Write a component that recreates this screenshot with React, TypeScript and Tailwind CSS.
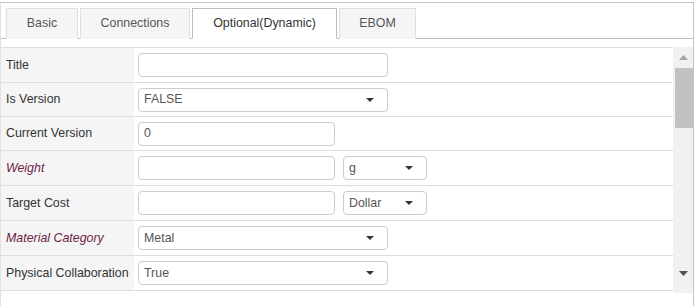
import { ReactNode } from "react";

type Field = {
  label: string;
  italic?: boolean;
  h: string;
  control: ReactNode;
};

function TextBox({ width, value }: { width: string; value?: string }) {
  return (
    <div className={`${width} h-[24px] border border-[#cccccc] rounded-[4px] bg-white flex items-center px-[5px] text-[12.4px] text-[#555555]`}>
      {value}
    </div>
  );
}

function Caret({ color = "#333333" }: { color?: string }) {
  return (
    <svg width="8" height="4" viewBox="0 0 8 4">
      <path d="M0 0 L8 0 L4 4 Z" fill={color} />
    </svg>
  );
}

function Dropdown({ width, value }: { width: string; value: string }) {
  return (
    <div className={`${width} h-[24px] border border-[#cccccc] rounded-[4px] bg-white flex items-center justify-between pl-[5px] pr-[13px] text-[12.4px] text-[#555555]`}>
      <span>{value}</span>
      <Caret />
    </div>
  );
}

const fields: Field[] = [
  { label: "Title", h: "h-[35px]", control: <TextBox width="w-[250px]" /> },
  { label: "Is Version", h: "h-[34px]", control: <Dropdown width="w-[250px]" value="FALSE" /> },
  { label: "Current Version", h: "h-[34px]", control: <TextBox width="w-[197px]" value="0" /> },
  {
    label: "Weight",
    italic: true,
    h: "h-[35px]",
    control: (
      <div className="flex gap-[8px]">
        <TextBox width="w-[197px]" />
        <Dropdown width="w-[84px]" value="g" />
      </div>
    ),
  },
  {
    label: "Target Cost",
    h: "h-[35px]",
    control: (
      <div className="flex gap-[8px]">
        <TextBox width="w-[197px]" />
        <Dropdown width="w-[84px]" value="Dollar" />
      </div>
    ),
  },
  { label: "Material Category", italic: true, h: "h-[35px]", control: <Dropdown width="w-[250px]" value="Metal" /> },
  { label: "Physical Collaboration", h: "h-[35px]", control: <Dropdown width="w-[250px]" value="True" /> },
];

const tabs = [
  { name: "Basic", w: "w-[72px]" },
  { name: "Connections", w: "w-[110px]" },
  { name: "Optional(Dynamic)", w: "w-[145px]", active: true },
  { name: "EBOM", w: "w-[77px]" },
];

export default function App() {
  return (
    <div className="w-[696px] h-[306px] bg-white overflow-hidden font-['Liberation_Sans',Arial,sans-serif]">
      <div className="mt-[2px] w-[694px] h-[304px] border-t border-r border-l border-t-[#c4c4c4] border-r-[#c4c4c4] border-l-[#e2e2e2] flex flex-col">
        {/* tab strip */}
        <div className="flex gap-[2px] pl-[5px] pt-[5px] h-[36px] border-b border-[#bdbdbd]">
          {tabs.map((t) => (
            <div
              key={t.name}
              className={`${t.w} h-[31px] flex items-center justify-center text-[12.4px] border ${
                t.active
                  ? "bg-white border-[#bdbdbd] border-b-white text-[#333333]"
                  : "bg-[#f5f5f5] border-[#dddddd] border-b-transparent h-[30px] text-[#555555]"
              }`}
            >
              {t.name}
            </div>
          ))}
        </div>

        {/* form body */}
        <div className="mt-[8px] flex">
          <div className="w-[672px] border-t border-[#dddddd]">
            {fields.map((f) => (
              <div key={f.label} className={`${f.h} flex border-b border-[#dddddd]`}>
                <div
                  className={`w-[133px] shrink-0 bg-[#f5f5f5] flex items-center pl-[5px] text-[12.4px] ${
                    f.italic ? "italic text-[#6e2346]" : "text-[#333333]"
                  }`}
                >
                  {f.label}
                </div>
                <div className="flex items-center pl-[4px]">{f.control}</div>
              </div>
            ))}
          </div>

          {/* scrollbar */}
          <div className="w-[20px] h-[246px] bg-[#f1f1f1] flex flex-col items-center">
            <div className="h-[21px] flex items-center justify-center">
              <svg width="9" height="5" viewBox="0 0 9 5">
                <path d="M0 5 L9 5 L4.5 0 Z" fill="#a3a3a3" />
              </svg>
            </div>
            <div className="w-[18px] ml-[2px] h-[60px] bg-[#c1c1c1]" />
            <div className="flex-1" />
            <div className="h-[22px] flex items-start justify-center">
              <svg width="9" height="5" viewBox="0 0 9 5">
                <path d="M0 0 L9 0 L4.5 5 Z" fill="#505050" />
              </svg>
            </div>
          </div>
        </div>
      </div>
    </div>
  );
}
